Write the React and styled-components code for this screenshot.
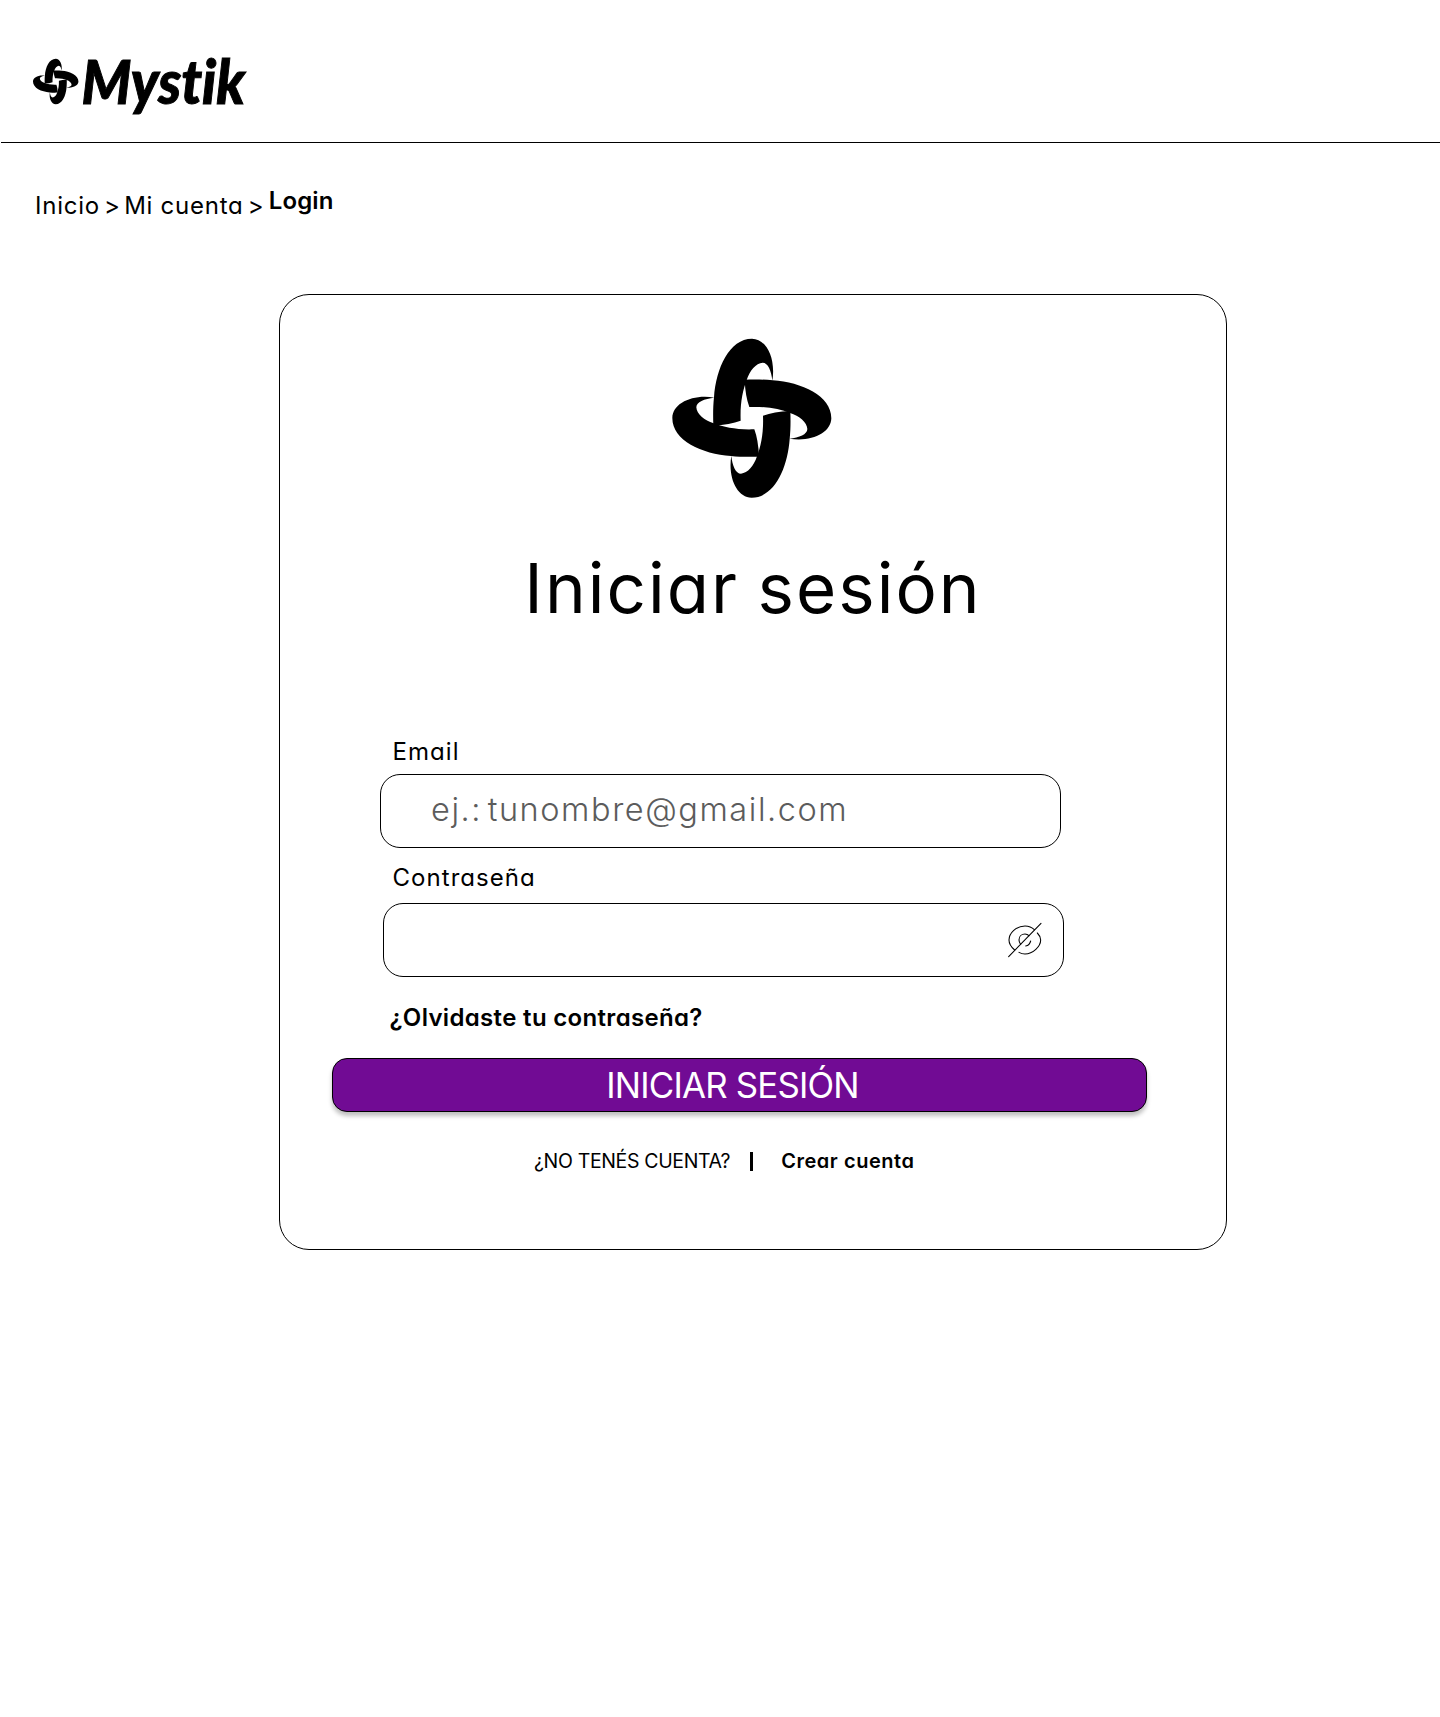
import React from 'react';
import styled, { createGlobalStyle } from 'styled-components';

const GlobalStyle = createGlobalStyle`
  *, *::before, *::after { box-sizing: border-box; }
  body {
    margin: 0;
    background: #fff;
    color: #000;
    font-family: Inter, "Open Sans", sans-serif;
    font-feature-settings: "cv11";
  }
`;

const Page = styled.div`
  min-height: 1717px;
`;

const Header = styled.header`
  display: flex;
  align-items: flex-start;
  height: 143px;
  margin-left: 1px;
  padding: 34px 0 0 31px;
  border-bottom: 1px solid #000;
`;

const BrandLink = styled.a`
  display: flex;
`;

const Wordmark = styled.text`
  font-family: Lato, sans-serif;
  font-size: 60px;
  font-weight: 900;
  font-style: italic;
  font-variant-ligatures: none;
  stroke: #000;
  stroke-width: 1px;
`;

const Breadcrumb = styled.nav`
  display: flex;
  align-items: flex-start;
  gap: 4.2px;
  padding: 48px 0 0 35px;
  font-size: 24px;
  line-height: 30px;
  letter-spacing: 0.75px;
`;

const Crumb = styled.span`
  white-space: nowrap;
`;

const Separator = styled.span`
  letter-spacing: 0;
`;

const CurrentCrumb = styled(Crumb)`
  margin: -5px 0 0 1px;
  font-weight: 600;
  letter-spacing: 0.1px;
`;

const Card = styled.main`
  display: flex;
  flex-direction: column;
  width: 948px;
  height: 956px;
  margin: 73px 0 0 279px;
  padding-top: 43px;
  border: 1px solid #000;
  border-radius: 30px;
`;

const CardMark = styled.div`
  display: flex;
  margin-left: 392px;
`;

const Title = styled.h1`
  margin: 50px 0 0;
  text-align: center;
  font-size: 69px;
  font-weight: 400;
  line-height: 80px;
  letter-spacing: 2.05px;
  word-spacing: -3px;
`;

const Form = styled.form`
  display: flex;
  flex-direction: column;
  align-items: flex-start;
  margin-top: 109px;
  padding-left: 52px;
`;

const Label = styled.label`
  margin: ${(p) => p.$top || 0}px 0 0 60.5px;
  font-size: 24px;
  line-height: 30px;
  letter-spacing: 1.05px;
`;

const Field = styled.div`
  display: flex;
  align-items: center;
  width: 681px;
  height: 74px;
  margin: ${(p) => p.$top}px 0 0 ${(p) => p.$left}px;
  padding: 0 19px 0 50px;
  border: 1px solid #000;
  border-radius: 20px;
`;

const Input = styled.input`
  flex: 1;
  min-width: 0;
  height: 60px;
  padding: 0 0 4px;
  border: 0;
  outline: 0;
  background: transparent;
  font-family: inherit;
  font-feature-settings: normal;
  font-size: 32.5px;
  font-weight: 300;
  letter-spacing: 1.55px;
  word-spacing: -5px;
  &::placeholder { color: #5c5c5c; opacity: 1; }
`;

const IconButton = styled.button`
  display: flex;
  padding: 0;
  border: 0;
  background: none;
`;

const ForgotLink = styled.a`
  margin: 26px 0 0 57.5px;
  font-size: 24px;
  font-weight: 600;
  line-height: 30px;
  letter-spacing: 0.33px;
`;

const SubmitButton = styled.button`
  width: 815px;
  height: 54px;
  margin-top: 25px;
  padding: 0 14px 0 0;
  border: 1px solid #000;
  border-radius: 15px;
  background: #710b94;
  box-shadow: 0 4px 4px rgba(0, 0, 0, 0.25);
  color: #fff;
  font-family: inherit;
  font-size: 34.8px;
  font-weight: 400;
  line-height: 52px;
  letter-spacing: -0.8px;
`;

const SignupRow = styled.div`
  display: flex;
  align-items: center;
  margin: 34px 0 0 254px;
  font-size: 19.5px;
  line-height: 30px;
`;

const SignupQuestion = styled.span`
  letter-spacing: -0.35px;
`;

const Divider = styled.span`
  width: 3px;
  height: 19px;
  margin: 0 28px 0 20px;
  background: #000;
`;

const SignupLink = styled.a`
  font-size: 20px;
  font-weight: 600;
  letter-spacing: 0.55px;
`;

const ARM =
  'M190 316C189 290 189 258 192 232C198 145 238 56 306 56C350 57 378 116 367 182C364 152 354 128 338 128C318 129 299 152 290 180C278 212 270 250 272 302Q240 314 190 316Z';

function Knot() {
  return [0, 90, 180, 270].map((angle) => (
    <path key={angle} d={ARM} transform={`rotate(${angle} 305.5 294.5)`} />
  ));
}

function EyeOff() {
  return (
    <svg width="38" height="40" viewBox="138 478 114 120" fill="none" stroke="#000" strokeWidth="3.2" strokeLinecap="round">
      <path d="M146 588L243 488" />
      <path d="M164 568C152 558 147 549 147 538C147 517 169 496 195 496C206 496 216 500 223 507" />
      <path d="M232 517C239 524 242 531 242 538C242 557 219 580 195 580C188 580 182 578 177 575" />
      <path d="M182 551C179 547 177 543 177 538C177 527 185 520 195 520C200 520 204 522 207 525" />
      <path d="M212 541C210 549 205 555 197 556" />
    </svg>
  );
}

export default function App() {
  return (
    <Page>
      <GlobalStyle />
      <Header>
        <BrandLink aria-label="Mystik">
          <svg width="240" height="100" viewBox="0 0 240 100">
            <g transform="translate(-5.4 19.5) scale(0.0953)">
              <Knot />
            </g>
            <Wordmark x="49.5" y="69.5" textLength="163.5" lengthAdjust="spacingAndGlyphs">
              Mystik
            </Wordmark>
          </svg>
        </BrandLink>
      </Header>
      <Breadcrumb>
        <Crumb>Inicio</Crumb>
        <Separator>&gt;</Separator>
        <Crumb>Mi cuenta</Crumb>
        <Separator>&gt;</Separator>
        <CurrentCrumb>Login</CurrentCrumb>
      </Breadcrumb>
      <Card>
        <CardMark>
          <svg width="160" height="160" viewBox="66 54 480 480">
            <Knot />
          </svg>
        </CardMark>
        <Title>Iniciar sesión</Title>
        <Form>
          <Label htmlFor="email">Email</Label>
          <Field $top={7} $left={48}>
            <Input id="email" type="text" placeholder="ej.: tunombre@gmail.com" />
          </Field>
          <Label htmlFor="password" $top={15}>Contraseña</Label>
          <Field $top={10} $left={51}>
            <Input id="password" type="password" />
            <IconButton type="button" aria-label="Mostrar contraseña">
              <EyeOff />
            </IconButton>
          </Field>
          <ForgotLink>¿Olvidaste tu contraseña?</ForgotLink>
          <SubmitButton type="button">INICIAR SESIÓN</SubmitButton>
        </Form>
        <SignupRow>
          <SignupQuestion>¿NO TENÉS CUENTA?</SignupQuestion>
          <Divider />
          <SignupLink>Crear cuenta</SignupLink>
        </SignupRow>
      </Card>
    </Page>
  );
}
